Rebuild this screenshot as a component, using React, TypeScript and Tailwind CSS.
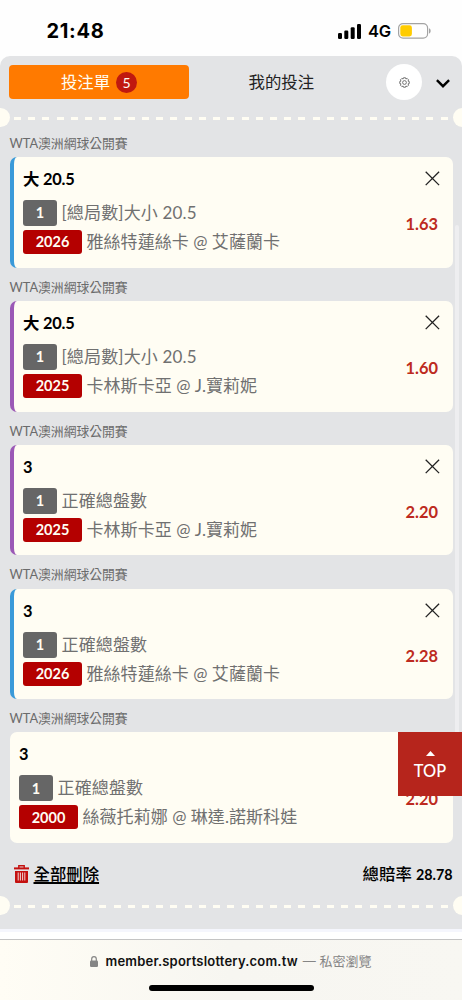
import { Fragment } from "react";

interface BetTypes {
  title: string;
  market: string;
  code: string;
  match: string;
  odds: string;
  accent: string;
  closable: boolean;
}

const bets: BetTypes[] = [
  {
    title: "大 20.5",
    market: "[總局數]大小 20.5",
    code: "2026",
    match: "雅絲特蓮絲卡 @ 艾薩蘭卡",
    odds: "1.63",
    accent: "border-l-4 border-[#3a9ad9]",
    closable: true,
  },
  {
    title: "大 20.5",
    market: "[總局數]大小 20.5",
    code: "2025",
    match: "卡林斯卡亞 @ J.寶莉妮",
    odds: "1.60",
    accent: "border-l-4 border-[#9b59b6]",
    closable: true,
  },
  {
    title: "3",
    market: "正確總盤數",
    code: "2025",
    match: "卡林斯卡亞 @ J.寶莉妮",
    odds: "2.20",
    accent: "border-l-4 border-[#9b59b6]",
    closable: true,
  },
  {
    title: "3",
    market: "正確總盤數",
    code: "2026",
    match: "雅絲特蓮絲卡 @ 艾薩蘭卡",
    odds: "2.28",
    accent: "border-l-4 border-[#3a9ad9]",
    closable: true,
  },
  {
    title: "3",
    market: "正確總盤數",
    code: "2000",
    match: "絲薇托莉娜 @ 琳達.諾斯科娃",
    odds: "2.20",
    accent: "",
    closable: false,
  },
];

const StatusBar = () => {
  return (
    <div className="flex h-14 shrink-0 items-center justify-between pt-[6px] pr-[31px] pl-[46.5px] font-['Inter','Liberation_Sans',sans-serif] text-black">
      <p className="text-[20px] leading-6 font-bold tracking-[0.7px]">21:48</p>
      <div className="flex items-center">
        <svg className="h-[15px] w-[23px]" viewBox="0 0 23 15">
          <rect x="0" y="9" width="4" height="6" rx="1.2" />
          <rect x="6.3" y="6.5" width="4" height="8.5" rx="1.2" />
          <rect x="12.7" y="3.3" width="4" height="11.7" rx="1.2" />
          <rect x="19" y="0" width="4" height="15" rx="1.2" />
        </svg>
        <p className="ml-[7px] w-[24px] text-[16.5px] leading-5 font-semibold tracking-[-0.2px]">
          4G
        </p>
        <svg className="ml-[6px] h-[16px] w-[33px]" viewBox="0 0 33 16">
          <rect
            x="0.6"
            y="0.6"
            width="29"
            height="14.6"
            rx="4.4"
            fill="none"
            stroke="#a3a3a3"
            strokeWidth="1.2"
          />
          <rect x="2.3" y="2.3" width="11.6" height="11.2" rx="2.4" fill="#ffcc00" />
          <path d="M31 5.3c2.2.8 2.2 4.4 0 5.2z" fill="#a3a3a3" />
        </svg>
      </div>
    </div>
  );
};

const Divider = () => {
  return (
    <div className="flex h-[19px] shrink-0 items-center justify-between overflow-hidden">
      <span className="-ml-[9.5px] h-[19px] w-[19px] shrink-0 rounded-full bg-[#fffdf3]" />
      <span className="mt-[2px] h-[2.4px] w-[434px] shrink-0 bg-[repeating-linear-gradient(90deg,#fffdf3_0px,#fffdf3_7px,transparent_7px,transparent_14.22px)]" />
      <span className="-mr-[9.5px] h-[19px] w-[19px] shrink-0 rounded-full bg-[#fffdf3]" />
    </div>
  );
};

const BetCard = ({ title, market, code, match, odds, accent, closable }: BetTypes) => {
  return (
    <Fragment>
      <p className="h-[33.3px] pt-[9px] text-[12.8px] leading-[20px] text-[#6b6b6b]">
        WTA澳洲網球公開賽
      </p>
      <div
        className={`flex h-[110.5px] justify-between rounded-[7px] bg-[#fffdf3] pr-[14.5px] pl-[9.5px] ${accent}`}
      >
        <div className="pt-[10px]">
          <p className="h-[24px] text-[16.4px] leading-[24px] font-bold tracking-[-0.2px] text-black">
            {title}
          </p>
          <div className="mt-[9px] flex h-[26px] items-center">
            <span className="flex h-[26px] w-[34px] items-center justify-center rounded-[3px] bg-[#666] text-[14.5px] font-bold text-[#fffdf3]">
              1
            </span>
            <span className="ml-[4.5px] text-[17px] leading-[26px] tracking-[0.15px] whitespace-nowrap text-[#707070]">
              {market}
            </span>
          </div>
          <div className="mt-[4px] flex h-[24px] items-center">
            <span className="flex h-[24px] w-[59px] items-center justify-center rounded-[3px] bg-[#b40000] text-[14.5px] font-bold text-[#fffdf3]">
              {code}
            </span>
            <span className="ml-[4.5px] text-[17px] leading-[24px] tracking-[0.05px] whitespace-nowrap text-[#707070]">
              {match}
            </span>
          </div>
        </div>
        <div className="flex flex-col items-end pt-[14px]">
          <svg className="-mr-[2px] h-[15px] w-[15px]" viewBox="0 0 15 15">
            {closable && (
              <path d="M.7.7l13.4 13.4M14.1.7L.7 14.1" fill="none" stroke="#222" strokeWidth="1.3" />
            )}
          </svg>
          <p className="mt-[26px] text-[16.4px] leading-[24px] font-bold text-[#bd2a20]">{odds}</p>
        </div>
      </div>
    </Fragment>
  );
};

const App = () => {
  return (
    <div className="relative flex h-[1000px] w-[462px] flex-col overflow-hidden bg-[#fefefe] font-['Lato','Noto_Sans_CJK_TC',sans-serif]">
      <StatusBar />

      <main className="flex h-[873px] shrink-0 flex-col rounded-t-[10px] bg-[#e3e4e6]">
        <div className="flex h-[52px] shrink-0 items-center pl-[9.3px]">
          <button className="flex h-[33.5px] w-[179.5px] items-center justify-center rounded-[4px] bg-[#ff7a00] text-[16.4px] text-[#fffdf3]">
            <span>投注單</span>
            <span className="ml-[6px] flex h-[21px] w-[21px] items-center justify-center rounded-full bg-[#c0190f] text-[14px]">
              5
            </span>
          </button>
          <button className="w-[185px] text-center text-[16.4px] text-[#222]">我的投注</button>
          <button className="ml-[12.5px] flex h-[36px] w-[36px] items-center justify-center rounded-full bg-white">
            <svg
              className="h-[11px] w-[11px]"
              viewBox="0 0 22 22"
              fill="none"
              stroke="#555"
              strokeWidth="1.6"
              strokeLinejoin="round"
            >
              <path d="M9 1.5h4l.8 2.5 2.5-1.2 2.9 2.9L18 8.2l2.5.8v4l-2.5.8 1.2 2.5-2.9 2.9-2.5-1.2-.8 2.5H9L8.2 18l-2.5 1.2-2.9-2.9L4 13.8 1.5 13V9L4 8.2 2.8 5.7l2.9-2.9L8.2 4z" />
              <circle cx="11" cy="11" r="3.8" />
            </svg>
          </button>
          <svg className="mt-[2px] ml-[14px] h-[9px] w-[14px]" viewBox="0 0 14 9">
            <path d="M.9 1.2L7 7.2l6.1-6" fill="none" stroke="#000" strokeWidth="2.4" />
          </svg>
        </div>
        <Divider />

        <div className="-mt-[3.1px] px-[9.5px]">
          {bets.map((bet, index) => (
            <BetCard key={index} {...bet} />
          ))}
        </div>

        <div className="flex h-[53.3px] shrink-0 items-center justify-between pt-[9px] pr-[9.5px] pl-[14px] text-black">
          <button className="flex items-center">
            <svg className="h-[18px] w-[15px]" viewBox="0 0 15 18" fill="none" stroke="#c4100f">
              <path d="M0 3.4h15" strokeWidth="2" />
              <path d="M4.8 3V.8h5.4V3" strokeWidth="1.4" />
              <path d="M1 6h13v11a1 1 0 0 1-1 1H2a1 1 0 0 1-1-1z" fill="#c4100f" stroke="none" />
              <path d="M4.2 7.5v8M6.4 7.5v8M8.6 7.5v8M10.8 7.5v8" stroke="#efd5d4" strokeWidth="1" />
            </svg>
            <span className="ml-[4.5px] text-[16.4px] leading-6 font-medium underline decoration-[1.5px] underline-offset-2">
              全部刪除
            </span>
          </button>
          <p className="text-[16.4px] leading-6 font-medium">
            總賠率 <span className="text-[14.3px] font-bold">28.78</span>
          </p>
        </div>
        <Divider />
      </main>

      <div className="h-[9.5px] shrink-0 border-t-[3px] border-[#f5f6fd] bg-white" />

      <footer className="flex flex-1 flex-col items-center border-t border-[#c4c4c4] bg-gradient-to-r from-[#fffdf5] via-[#f7f6f1] to-[#f8f7f2] pt-[12px] font-['Inter','Noto_Sans_CJK_TC',sans-serif]">
        <div className="flex h-[20px] items-center text-[13px]">
          <svg className="h-[11px] w-[8px]" viewBox="0 0 8 11">
            <rect y="4.5" width="8" height="6.5" rx="1.2" fill="#858585" />
            <path d="M1.7 5V3a2.3 2.3 0 0 1 4.6 0v2" fill="none" stroke="#858585" strokeWidth="1.2" />
          </svg>
          <span className="ml-[7px] font-semibold tracking-[0.2px] text-[#111]">
            member.sportslottery.com.tw
          </span>
          <span className="ml-[5px] text-[#858585]">— 私密瀏覽</span>
        </div>
        <div className="mt-[13px] h-[6px] w-[165px] rounded-full bg-black" />
      </footer>

      {/* scrollbar thumb */}
      <div className="absolute top-[225px] right-[3px] h-[515px] w-[4px] rounded-full bg-[#eeeef0]" />

      <button className="absolute top-[732px] right-0 flex h-[64px] w-[64px] flex-col items-center bg-[#b6251c] pt-[19px] text-white">
        <svg className="h-[5px] w-[9px]" viewBox="0 0 9 5">
          <path d="M4.5 0L9 5H0z" fill="#fff" />
        </svg>
        <span className="mt-[4px] text-[16.4px] leading-[22px] font-medium">TOP</span>
      </button>
    </div>
  );
};

export default App;
